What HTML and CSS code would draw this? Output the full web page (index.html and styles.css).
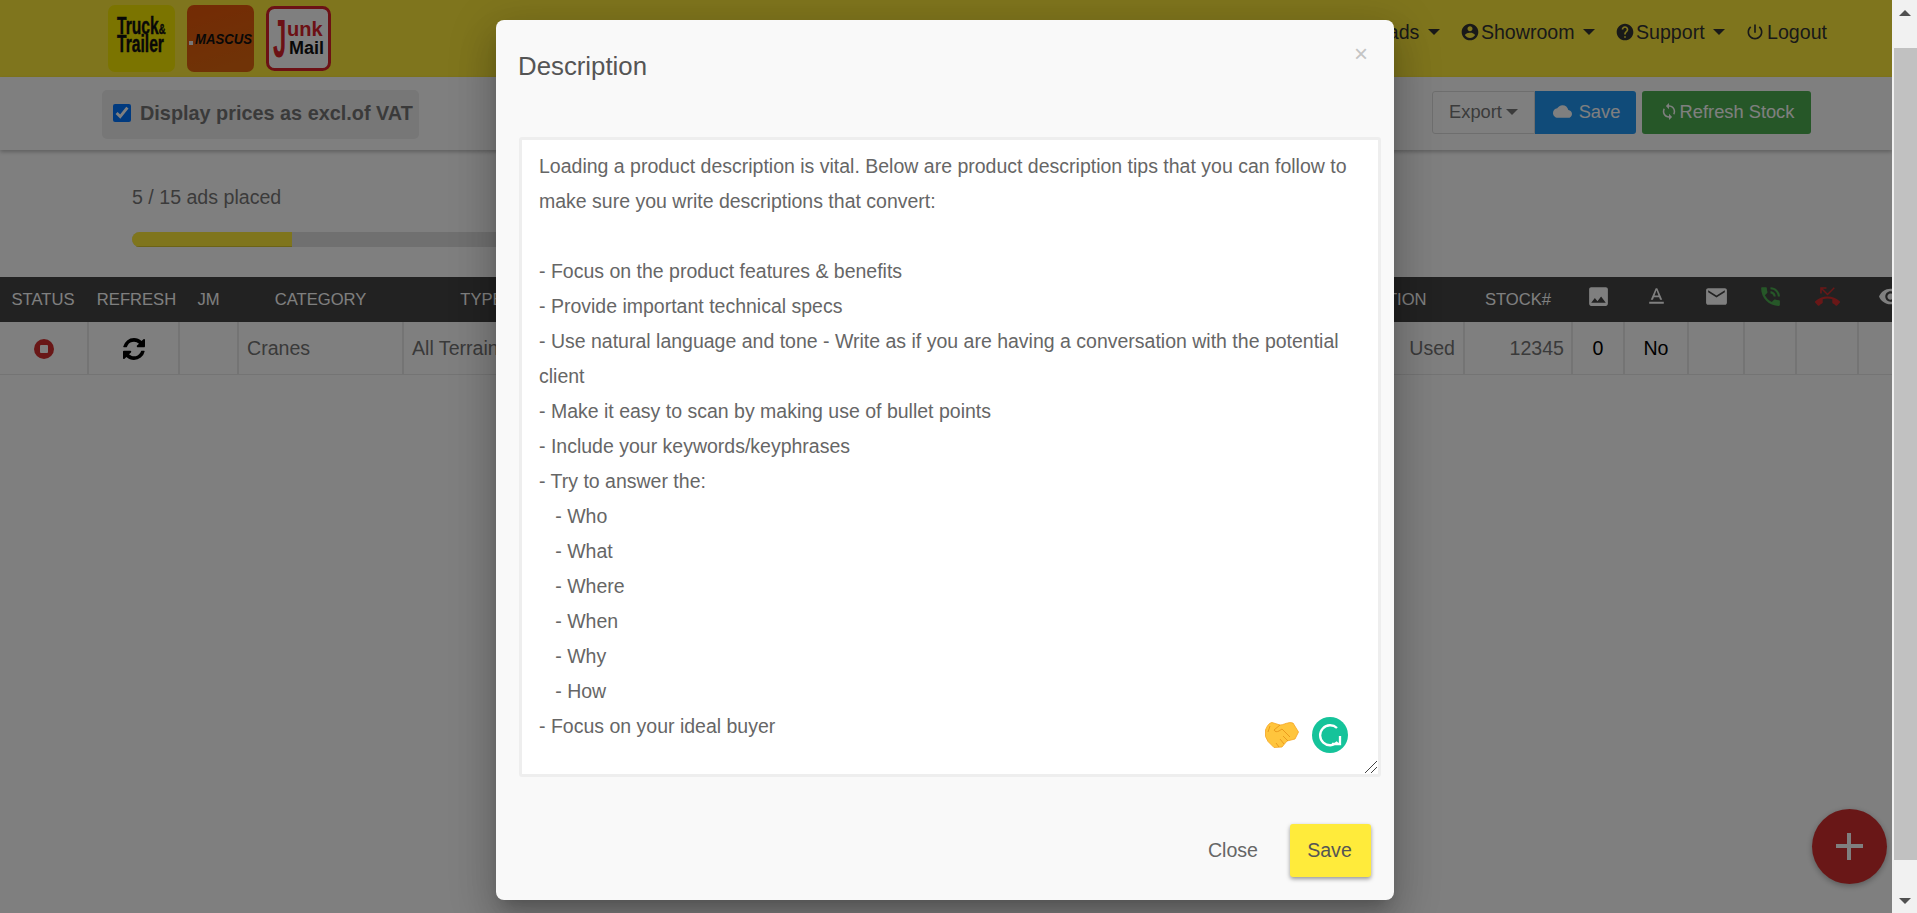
FILE: index.html
```html
<!DOCTYPE html>
<html lang="en">
<head>
  <meta charset="UTF-8" />
  <title>Stock</title>
  <link rel="stylesheet" href="styles.css">
</head>
<body>
  <div class="page">
    <header class="topbar">
      <div class="logos">
        <svg class="logo" viewBox="0 0 67 67">
          <rect width="67" height="67" rx="7" fill="#f6e800"/>
          <text class="logo-heavy" transform="translate(9 0) scale(.68 1)" font-size="23" fill="#111" stroke="#111"><tspan x="0" y="29">Truck<tspan font-size="14">&amp;</tspan></tspan><tspan x="0" y="47">Trailer</tspan></text>
        </svg>
        <svg class="logo" viewBox="0 0 67 67">
          <defs>
            <linearGradient id="mascusBg" x1="0" y1="0" x2="0.3" y2="1">
              <stop offset="0" stop-color="#e8560a"/>
              <stop offset="1" stop-color="#e0660e"/>
            </linearGradient>
          </defs>
          <rect width="67" height="67" rx="7" fill="url(#mascusBg)"/>
          <rect x="2" y="36" width="4" height="4" fill="#eee"/>
          <text class="logo-bold" transform="translate(8 39) scale(.94 1)" font-size="14" font-style="italic" fill="#111">MASCUS</text>
        </svg>
        <svg class="logo logo-junk" viewBox="0 0 65 65">
          <rect x="1.500" y="1.500" width="62" height="62" rx="7" fill="#fff" stroke="#d8232a" stroke-width="3"/>
          <text class="logo-bold" transform="translate(7 51) scale(.45 1)" font-size="53" fill="#d8232a">J</text>
          <text class="logo-bold"><tspan x="21" y="30" font-size="20" fill="#d8232a">unk</tspan><tspan x="23" y="48" font-size="18" fill="#111">Mail</tspan></text>
        </svg>
      </div>
      <nav class="main-nav">
        <a>Leads <i class="caret"></i></a>
        <a><svg class="nav-icon" viewBox="0 0 24 24"><path d="M12 2C6.48 2 2 6.48 2 12s4.48 10 10 10 10-4.48 10-10S17.52 2 12 2zm0 3c1.66 0 3 1.34 3 3s-1.34 3-3 3-3-1.34-3-3 1.34-3 3-3zm0 14.2c-2.5 0-4.71-1.28-6-3.22.03-1.99 4-3.08 6-3.08 1.99 0 5.97 1.09 6 3.08-1.29 1.94-3.5 3.22-6 3.22z"/></svg>Showroom <i class="caret"></i></a>
        <a><svg class="nav-icon" viewBox="0 0 24 24"><path d="M12 2C6.48 2 2 6.48 2 12s4.48 10 10 10 10-4.48 10-10S17.52 2 12 2zm1 17h-2v-2h2v2zm2.07-7.75l-.9.92C13.45 12.9 13 13.5 13 15h-2v-.5c0-1.1.45-2.1 1.17-2.83l1.24-1.26c.37-.36.59-.86.59-1.41 0-1.1-.9-2-2-2s-2 .9-2 2H8c0-2.21 1.79-4 4-4s4 1.79 4 4c0 .88-.36 1.68-.93 2.25z"/></svg>Support <i class="caret"></i></a>
        <a><svg class="nav-icon power" viewBox="0 0 24 24"><path d="M13 3h-2v10h2V3zm4.83 2.17l-1.42 1.42C17.99 7.86 19 9.81 19 12c0 3.87-3.13 7-7 7s-7-3.13-7-7c0-2.19 1.01-4.14 2.58-5.42L6.17 5.17C4.23 6.82 3 9.26 3 12c0 4.97 4.03 9 9 9s9-4.03 9-9c0-2.74-1.23-5.18-3.17-6.83z"/></svg>Logout</a>
      </nav>
    </header>

    <div class="toolbar">
      <label class="vat-check"><input type="checkbox" checked> Display prices as excl.of VAT</label>
      <div class="toolbar-btns">
        <div class="btn-group">
          <button class="btn btn-light">Export <i class="caret"></i></button>
          <button class="btn btn-blue"><svg class="btn-icon" viewBox="0 0 24 24"><path d="M19.35 10.04C18.67 6.59 15.64 4 12 4 9.11 4 6.6 5.64 5.35 8.04 2.34 8.36 0 10.91 0 14c0 3.31 2.69 6 6 6h13c2.76 0 5-2.24 5-5 0-2.64-2.05-4.78-4.65-4.96z"/></svg>Save</button>
        </div>
        <button class="btn btn-green"><svg class="btn-icon small" viewBox="3 0 18 24"><path d="M12 4V1L8 5l4 4V6c3.31 0 6 2.69 6 6 0 1.01-.25 1.97-.7 2.8l1.46 1.46C19.54 15.03 20 13.57 20 12c0-4.42-3.58-8-8-8zm0 14c-3.31 0-6-2.69-6-6 0-1.01.25-1.97.7-2.8L5.24 7.74C4.46 8.97 4 10.43 4 12c0 4.42 3.58 8 8 8v3l4-4-4-4v3z"/></svg>Refresh Stock</button>
      </div>
    </div>

    <section class="ads-panel">
      <p class="ads-count">5 / 15 ads placed</p>
      <div class="progress"><div class="progress-fill" style="width: 33.33%"></div></div>
    </section>

    <table class="stock-table">
      <colgroup>
        <col class="c-88"><col class="c-91"><col class="c-59"><col class="c-165"><col class="c-158"><col class="c-735"><col class="c-168"><col class="c-108"><col class="c-52"><col class="c-64"><col class="c-56"><col class="c-52"><col class="c-62"><col class="c-64">
      </colgroup>
      <thead>
        <tr>
          <th class="th-status">STATUS</th>
          <th class="th-refresh">REFRESH</th>
          <th>JM</th>
          <th>CATEGORY</th>
          <th>TYPE</th>
          <th>MODEL</th>
          <th>CONDITION</th>
          <th>STOCK#</th>
          <th><svg class="th-icon" viewBox="0 0 24 24"><path d="M21 19V5c0-1.1-.9-2-2-2H5c-1.1 0-2 .9-2 2v14c0 1.100.9 2 2 2h14c1.100 0 2-.9 2-2zM8.500 13.500l2.500 3.010L14.500 12l4.500 6H5l3.500-4.500z"/></svg></th>
          <th><svg class="th-icon" viewBox="0 0 24 24"><path d="M5 17v2h14v-2H5zm4.500-4.200h5l.9 2.200h2.100L12.750 4h-1.500L6.500 15h2.100l.9-2.200zM12 5.980L13.870 11h-3.740L12 5.980z"/></svg></th>
          <th><svg class="th-icon" viewBox="0 0 24 24"><path d="M20 4H4c-1.100 0-1.990.9-1.990 2L2 18c0 1.100.9 2 2 2h16c1.100 0 2-.9 2-2V6c0-1.100-.9-2-2-2zm0 4l-8 5-8-5V6l8 5 8-5v2z"/></svg></th>
          <th><svg class="th-icon green" viewBox="0 0 24 24"><path d="M20 15.500c-1.250 0-2.450-.2-3.570-.57-.35-.11-.74-.03-1.020.24l-2.200 2.200c-2.830-1.440-5.150-3.750-6.590-6.590l2.200-2.210c.28-.26.36-.65.25-1C8.700 6.450 8.500 5.250 8.500 4c0-.55-.45-1-1-1H4c-.55 0-1 .45-1 1 0 9.390 7.610 17 17 17 .55 0 1-.45 1-1v-3.500c0-.55-.45-1-1-1zM19 12h2c0-4.970-4.030-9-9-9v2c3.870 0 7 3.130 7 7zm-4 0h2c0-2.760-2.240-5-5-5v2c1.660 0 3 1.340 3 3z"/></svg></th>
          <th><svg class="th-icon red" viewBox="0 0 24 24"><path d="M6.500 5.500L12 11l7-7-1-1-6 6-4.500-4.500H11V3H5v6h1.500V5.500zm17.210 11.170C20.660 13.780 16.540 12 12 12 7.460 12 3.340 13.780.29 16.670c-.18.18-.29.43-.29.71s.11.53.29.71l2.480 2.480c.18.18.43.29.71.29.27 0 .52-.11.7-.28.79-.74 1.690-1.360 2.660-1.850.33-.16.56-.5.56-.9v-3.100c1.450-.48 3-.73 4.600-.73s3.150.25 4.600.72v3.100c0 .39.23.74.56.9.98.49 1.870 1.120 2.670 1.850.18.18.43.28.7.28.28 0 .53-.11.71-.29l2.480-2.480c.18-.18.29-.43.29-.71s-.11-.53-.29-.71z"/></svg></th>
          <th><svg class="th-icon" viewBox="0 0 24 24"><path d="M12 4.500C7 4.500 2.730 7.610 1 12c1.730 4.390 6 7.500 11 7.500s9.270-3.110 11-7.500c-1.730-4.390-6-7.500-11-7.500zM12 17c-2.760 0-5-2.240-5-5s2.240-5 5-5 5 2.240 5 5-2.240 5-5 5zm0-8c-1.660 0-3 1.340-3 3s1.340 3 3 3 3-1.340 3-3-1.340-3-3-3z"/></svg></th>
        </tr>
      </thead>
      <tbody>
        <tr>
          <td class="center"><svg class="stop-icon" viewBox="0 0 20 20"><circle cx="10" cy="10" r="10"/><rect x="6" y="6" width="8" height="8" rx="1"/></svg></td>
          <td class="center"><svg class="refresh-icon" viewBox="0 0 1536 1536"><path d="M1511 928q0 5-1 7-64 268-268 434.500t-478 166.500q-146 0-282.500-55t-243.500-157l-129 129q-19 19-45 19t-45-19-19-45v-448q0-26 19-45t45-19h448q26 0 45 19t19 45-19 45l-137 137q71 66 161 102t187 36q134 0 250-65t186-179q11-17 53-117 8-23 30-23h192q13 0 22.500 9.500t9.500 22.500zm25-800v448q0 26-19 45t-45 19h-448q-26 0-45-19t-19-45 19-45l138-138q-148-137-349-137-134 0-250 65t-186 179q-11 17-53 117-8 23-30 23h-199q-13 0-22.500-9.500t-9.500-22.500v-7q65-268 270-434.500t480-166.500q146 0 284 55.500t245 156.500l130-129q19-19 45-19t45 19 19 45z"/></svg></td>
          <td></td>
          <td>Cranes</td>
          <td>All Terrain</td>
          <td></td>
          <td class="right">Used</td>
          <td class="right stock-no">12345</td>
          <td class="center dark">0</td>
          <td class="center dark">No</td>
          <td></td>
          <td></td>
          <td></td>
          <td></td>
        </tr>
      </tbody>
    </table>

    <div class="fab"><i class="fab-h"></i><i class="fab-v"></i></div>

    <div class="backdrop">
      <div class="modal">
        <div class="modal-head">
          <h3>Description</h3>
          <span class="modal-close">×</span>
        </div>
        <div class="modal-body">
          <textarea class="desc-input" spellcheck="false">Loading a product description is vital. Below are product description tips that you can follow to make sure you write descriptions that convert:

- Focus on the product features &amp; benefits
- Provide important technical specs
- Use natural language and tone - Write as if you are having a conversation with the potential client
- Make it easy to scan by making use of bullet points
- Include your keywords/keyphrases
- Try to answer the:
   - Who
   - What
   - Where
   - When
   - Why
   - How
- Focus on your ideal buyer</textarea>
          <div class="input-badges">
            <svg class="shake" viewBox="0 0 34 26">
              <path fill="#ffc53d" stroke="#f5a623" stroke-width=".8" d="M.5 8C2 4 4 1 7 .5l8 2.500c3 0 6-2 8-2 2-1 4 0 5 0l5.500 9-3.500 7-8 2-5 6-8 .5-6-6-2.500-5z"/>
              <path fill="none" stroke="#e8961a" stroke-width=".9" d="M15 3 9 8c1 2 3 2 5 1l3-2 8 8M23 19l-5-5M19 22l-4-5M14 25l-3-4M5 4l-2 6"/>
            </svg>
            <svg class="gram" viewBox="0 0 36 36">
              <circle cx="18" cy="18" r="18" fill="#15c39a"/>
              <path fill="none" stroke="#fff" stroke-width="2.300" d="M25 11A10 10 0 1 0 25.500 25M20 27h8v-8"/>
            </svg>
          </div>
          <svg class="resize-grip" viewBox="0 0 12 12"><path fill="none" stroke="#444" stroke-width="1" d="M0 12 12 0M6 12l6-6"/></svg>
        </div>
        <div class="modal-foot">
          <a class="link-btn">Close</a>
          <button class="save-btn">Save</button>
        </div>
      </div>
    </div>
  </div>

  <div class="scrollbar">
    <div class="sb-end sb-top"><i class="arrow-up"></i></div>
    <div class="sb-thumb"></div>
    <div class="sb-end sb-bottom"><i class="arrow-down"></i></div>
  </div>
</body>
</html>
```

FILE: styles.css
```css
* {
  box-sizing: border-box;
  font-family: "Liberation Sans", Arial, sans-serif;
}

body {
  margin: 0;
  height: 100vh;
  display: flex;
  overflow: hidden;
  background-color: #fff;
  color: #757575;
}

.page {
  flex: 1;
  min-width: 0;
  position: relative;
  overflow: hidden;
}

.topbar {
  height: 77px;
  background-color: #ffeb3b;
  display: flex;
  align-items: center;
  justify-content: space-between;
  padding: 0 65px 0 108px;
}

.logos {
  display: flex;
  align-items: center;
  gap: 12px;
}

.logo {
  width: 67px;
  height: 67px;
}

.logo-junk {
  width: 65px;
  height: 65px;
}

.logo-heavy {
  font-weight: bold;
  stroke-width: 0.4px;
}

.logo-bold {
  font-weight: bold;
}

.main-nav {
  display: flex;
  align-items: center;
  gap: 20px;
  font-size: 19.600px;
  color: #333;
  padding-bottom: 13px;
}

.main-nav a {
  display: flex;
  align-items: center;
  white-space: pre;
}

.nav-icon {
  width: 20px;
  height: 20px;
  fill: #333;
  margin-right: 1px;
}

.nav-icon.power {
  margin-right: 2px;
}

.caret {
  display: inline-block;
  width: 0;
  height: 0;
  border-left: 6px solid transparent;
  border-right: 6px solid transparent;
  border-top: 6px solid currentColor;
  margin-left: 3px;
  vertical-align: middle;
}

.toolbar {
  height: 73px;
  background-color: #fff;
  box-shadow: 0 2px 4px rgba(0, 0, 0, 0.25);
  display: flex;
  align-items: center;
  justify-content: space-between;
  padding: 0 81px 0 102px;
  position: relative;
}

.vat-check {
  height: 49px;
  width: 317px;
  margin-top: 2px;
  background-color: #eee;
  border-radius: 5px;
  display: flex;
  align-items: center;
  gap: 9px;
  padding: 0 0 3px 11px;
  font-size: 19.850px;
  font-weight: bold;
  color: #757575;
  white-space: nowrap;
}

.vat-check input {
  width: 18px;
  height: 18px;
  margin: 0;
}

.toolbar-btns {
  display: flex;
  gap: 6px;
  margin-bottom: 2px;
}

.btn-group {
  display: flex;
}

.btn {
  height: 43px;
  border: 0;
  padding-bottom: 3px;
  font-size: 18.300px;
  color: #fff;
  display: flex;
  align-items: center;
  border-radius: 3px;
}

.btn-light {
  width: 103px;
  background-color: #fff;
  color: #777;
  border: 1px solid #ddd;
  border-radius: 3px 0 0 3px;
  justify-content: center;
}

.btn-light .caret {
  margin-left: 4px;
}

.btn-blue {
  width: 101px;
  padding-left: 8px;
  background-color: #2196f3;
  border-radius: 0 3px 3px 0;
  justify-content: center;
}

.btn-green {
  width: 169px;
  padding-left: 9px;
  background-color: #4caf50;
  justify-content: center;
}

.btn-icon {
  width: 19px;
  height: 19px;
  fill: #fff;
  margin-right: 7px;
}

.btn-icon.small {
  width: 14px;
  height: 19px;
  margin-right: 4px;
}

.ads-panel {
  height: 127px;
  margin: 0 81px 0 102px;
  padding: 37px 30px 0;
  background-color: #fff;
}

.ads-count {
  margin: 0;
  font-size: 19.600px;
  line-height: 20px;
  color: #777;
}

.progress {
  width: 480px;
  height: 15px;
  margin-top: 25px;
  background-color: #e0e0e0;
  border-radius: 8px 0 0 8px;
  overflow: hidden;
}

.progress-fill {
  height: 100%;
  background-color: #ffeb3b;
  border-bottom: 1px solid #d8c72f;
}

.stock-table {
  width: 1922px;
  table-layout: fixed;
  border-collapse: collapse;
  font-size: 19.600px;
}

.c-88 { width: 88px; }
.c-91 { width: 91px; }
.c-59 { width: 59px; }
.c-165 { width: 165px; }
.c-158 { width: 158px; }
.c-735 { width: 735px; }
.c-168 { width: 168px; }
.c-108 { width: 108px; }
.c-52 { width: 52px; }
.c-64 { width: 64px; }
.c-56 { width: 56px; }
.c-62 { width: 62px; }

.stock-table th {
  height: 45px;
  padding: 0;
  background-color: #444;
  color: #fff;
  font-size: 16.600px;
  font-weight: normal;
  text-align: center;
  white-space: nowrap;
}

.stock-table th.th-status {
  padding-right: 2px;
}

.stock-table th.th-refresh {
  padding-left: 6px;
}

.stock-table td {
  height: 52px;
  padding: 2px 8px 0;
  border-right: 2px solid #e8e8e8;
  border-bottom: 1px solid #e8e8e8;
  white-space: nowrap;
}

.stock-table td.center {
  text-align: center;
  padding: 0;
}

.stock-table td.right {
  text-align: right;
}

.stock-table td.stock-no {
  padding-right: 7px;
}

.stock-table td.dark {
  color: #000;
  padding-top: 2px;
}

.th-icon {
  width: 25px;
  height: 25px;
  margin-bottom: 6px;
  fill: #fff;
  vertical-align: middle;
}

.th-icon.green {
  fill: #4caf50;
}

.th-icon.red {
  fill: #d32f2f;
}

.stop-icon {
  width: 20px;
  height: 20px;
  vertical-align: middle;
}

.stop-icon circle {
  fill: #d32f2f;
}

.stop-icon rect {
  fill: #fff;
}

.refresh-icon {
  width: 22px;
  height: 22px;
  fill: #000;
  vertical-align: middle;
}

.fab {
  position: absolute;
  left: 1812px;
  top: 809px;
  width: 75px;
  height: 75px;
  border-radius: 50%;
  background-color: #d32f2f;
  box-shadow: 0 2px 6px rgba(0, 0, 0, 0.3);
}

.fab-h,
.fab-v {
  position: absolute;
  background-color: #fff;
}

.fab-h {
  left: 24px;
  top: 35px;
  width: 27px;
  height: 4px;
}

.fab-v {
  left: 35px;
  top: 24px;
  width: 4px;
  height: 27px;
}

.backdrop {
  position: absolute;
  top: 0;
  left: 0;
  right: 0;
  bottom: 0;
  background-color: rgba(0, 0, 0, 0.5);
  padding-top: 20px;
  padding-right: 2px;
  display: flex;
  justify-content: center;
  align-items: flex-start;
}

.modal {
  width: 898px;
  height: 880px;
  background-color: #f9f9f9;
  border-radius: 8px;
  box-shadow: 0 24px 38px 3px rgba(0, 0, 0, 0.14), 0 9px 46px 8px rgba(0, 0, 0, 0.12), 0 11px 15px -7px rgba(0, 0, 0, 0.2);
  display: flex;
  flex-direction: column;
}

.modal-head {
  height: 117px;
  padding: 31px 26px 0 22px;
  display: flex;
  justify-content: space-between;
}

.modal-head h3 {
  margin: 0;
  font-size: 25.800px;
  line-height: 30px;
  font-weight: normal;
  color: #555;
}

.modal-close {
  font-size: 24px;
  line-height: 24px;
  color: #c4c4c4;
  margin-top: -9px;
}

.modal-body {
  height: 640px;
  margin: 0 13px 0 23px;
  position: relative;
}

.desc-input {
  display: block;
  width: 100%;
  height: 100%;
  border: 3px solid #eee;
  border-radius: 3px;
  background-color: #fff;
  padding: 9px 16px 8px 17px;
  font-size: 19.500px;
  line-height: 35px;
  color: #666;
  outline: none;
  overflow: hidden;
  resize: none;
}

.input-badges {
  position: absolute;
  left: 746px;
  top: 580px;
  display: flex;
  align-items: center;
  gap: 13px;
}

.shake {
  width: 34px;
  height: 26px;
}

.gram {
  width: 36px;
  height: 36px;
}

.resize-grip {
  position: absolute;
  right: 4px;
  bottom: 4px;
  width: 12px;
  height: 12px;
}

.modal-foot {
  flex: 1;
  display: flex;
  align-items: flex-start;
  justify-content: flex-end;
  gap: 32px;
  padding: 47px 23px 0 0;
}

.link-btn {
  font-size: 19.600px;
  line-height: 53px;
  color: #666;
}

.save-btn {
  width: 81px;
  height: 53px;
  border: 0;
  padding: 0 8px 0 6px;
  border-radius: 3px;
  background-color: #ffeb3b;
  color: #555;
  font-size: 19.600px;
  box-shadow: 0 2px 4px rgba(0, 0, 0, 0.4);
}

.scrollbar {
  width: 25px;
  flex-shrink: 0;
  background-color: #f1f1f1;
  display: flex;
  flex-direction: column;
}

.sb-end {
  display: flex;
  justify-content: center;
  flex-shrink: 0;
}

.sb-top {
  height: 48px;
  padding-top: 10px;
}

.sb-thumb {
  flex: 1;
  margin-left: 2px;
  background-color: #c1c1c1;
}

.sb-bottom {
  height: 53px;
  padding-top: 38px;
}

.arrow-up,
.arrow-down {
  width: 0;
  height: 0;
  border-left: 6px solid transparent;
  border-right: 6px solid transparent;
}

.arrow-up {
  border-bottom: 6px solid #505050;
}

.arrow-down {
  border-top: 6px solid #505050;
}
```
